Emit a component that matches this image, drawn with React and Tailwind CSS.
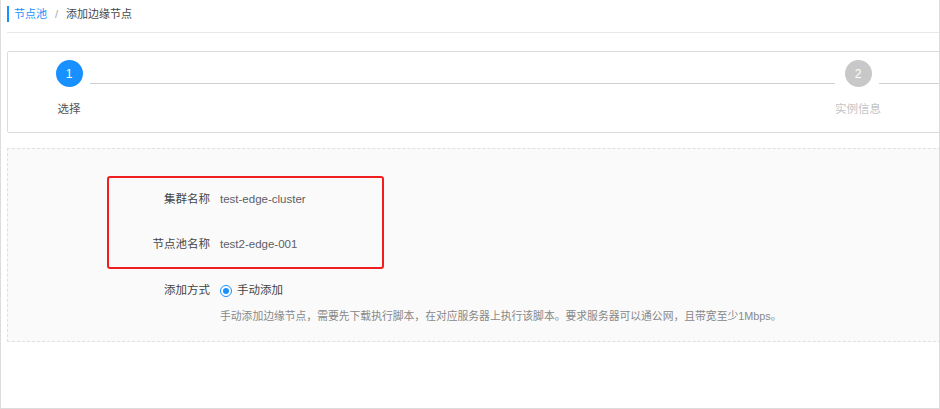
import React from 'react';

// 步骤条中的单个节点
const Step = ({ num, label, active }) => (
  <div className="w-[40px] flex flex-col items-center shrink-0">
    <div
      className={`w-[27px] h-[27px] rounded-full flex items-center justify-center text-[12px] text-white ${
        active ? 'bg-[#1890ff]' : 'bg-[#c8c8c8]'
      }`}
    >
      {num}
    </div>
    <div className={`mt-[14px] text-[11.5px] leading-[17px] whitespace-nowrap ${active ? 'text-[#555]' : 'text-[#c4c4c4]'}`}>
      {label}
    </div>
  </div>
);

const FormRow = ({ label, children, className = "" }) => (
  <div className={`flex items-center h-[20px] text-[11.5px] ${className}`}>
    <div className="w-[101px] text-right text-[#444] shrink-0">{label}</div>
    <div className="ml-[10px] flex items-center text-[#5c6068] whitespace-nowrap">{children}</div>
  </div>
);

export default function App() {
  return (
    <div
      className="w-[940px] h-[409px] bg-white border-l border-r border-b border-[#dcdcdc] overflow-hidden"
      style={{ fontFamily: '"Liberation Sans", "Noto Sans CJK SC", sans-serif' }}
    >
      <div className="w-[1100px] pl-[6px]">
        {/* 面包屑 */}
        <div className="mt-[6px] h-[16px] flex items-center border-l-2 border-[#1890ff] pl-[5px] text-[11px]">
          <span className="text-[#1890ff]">节点池</span>
          <span className="px-[8px] text-[#aaa]">/</span>
          <span className="text-[#444]">添加边缘节点</span>
        </div>
        <div className="mt-[10px] h-px bg-[#e8e8e8]" />

        {/* 步骤条 */}
        <div className="mt-[18px] h-[82px] border border-[#dcdcdc] rounded-[2px] pt-[8px] flex items-start">
          <div className="ml-[41px] shrink-0">
            <Step num="1" label="选择" active />
          </div>
          <div className="ml-[1px] mt-[23px] w-[745px] h-px bg-[#cfcfcf] shrink-0" />
          <div className="ml-[3px] shrink-0">
            <Step num="2" label="实例信息" />
          </div>
          <div className="ml-[1px] mt-[23px] w-[200px] h-px bg-[#cfcfcf] shrink-0" />
        </div>

        {/* 表单区 */}
        <div className="mt-[15px] h-[194px] border border-dashed border-[#e0e0e0] bg-[#fafafa] pt-[27px]">
          <div className="ml-[99px] w-[277px] h-[93px] border-2 border-[#f01e1e] rounded-[3px] pt-[12px]">
            <FormRow label="集群名称">test-edge-cluster</FormRow>
            <FormRow label="节点池名称" className="mt-[25px]">test2-edge-001</FormRow>
          </div>
          <FormRow label="添加方式" className="ml-[101px] mt-[12px]">
            <span className="w-[12px] h-[12px] rounded-full border border-[#1890ff] bg-white flex items-center justify-center">
              <span className="w-[6px] h-[6px] rounded-full bg-[#1890ff]" />
            </span>
            <span className="ml-[5px] text-[#444]">手动添加</span>
          </FormRow>
          <div className="ml-[212px] mt-[5px] h-[20px] flex items-center text-[10.8px] text-[#888]">
            手动添加边缘节点，需要先下载执行脚本，在对应服务器上执行该脚本。要求服务器可以通公网，且带宽至少1Mbps。
          </div>
        </div>
      </div>
    </div>
  );
}
